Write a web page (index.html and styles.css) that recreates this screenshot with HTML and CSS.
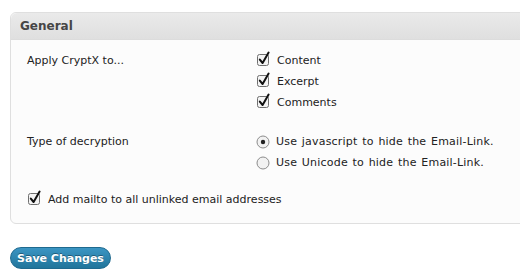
FILE: index.html
```html
<!DOCTYPE html>
<html lang="en">
<head>
    <meta charset="UTF-8">
    <link rel="stylesheet" href="styles.css">
    <title>CryptX Settings</title>
</head>
<body>
    <div class="panel">
        <div class="panel-head">General</div>
        <div class="panel-body">
            <div class="row">
                <div class="row-label">Apply CryptX to...</div>
                <div class="row-options">
                    <label class="opt">
                        <svg class="check" viewBox="0 0 16 16"><rect x="1.5" y="3.5" width="11" height="11" rx="2"/><path d="M3.8 8.6 L6.6 12 L12.6 1.6"/></svg>
                        Content
                    </label>
                    <label class="opt">
                        <svg class="check" viewBox="0 0 16 16"><rect x="1.5" y="3.5" width="11" height="11" rx="2"/><path d="M3.8 8.6 L6.6 12 L12.6 1.6"/></svg>
                        Excerpt
                    </label>
                    <label class="opt">
                        <svg class="check" viewBox="0 0 16 16"><rect x="1.5" y="3.5" width="11" height="11" rx="2"/><path d="M3.8 8.6 L6.6 12 L12.6 1.6"/></svg>
                        Comments
                    </label>
                </div>
            </div>

            <div class="row row-radio">
                <div class="row-label">Type of decryption</div>
                <div class="row-options">
                    <label class="opt">
                        <svg class="radio" viewBox="0 0 14 14"><circle cx="7" cy="7" r="6"/><circle class="dot" cx="7" cy="7" r="2.2"/></svg>
                        Use javascript to hide the Email-Link.
                    </label>
                    <label class="opt">
                        <svg class="radio" viewBox="0 0 14 14"><circle cx="7" cy="7" r="6"/></svg>
                        Use Unicode to hide the Email-Link.
                    </label>
                </div>
            </div>

            <div class="row row-mailto">
                <label class="opt">
                    <svg class="check" viewBox="0 0 16 16"><rect x="1.5" y="3.5" width="11" height="11" rx="2"/><path d="M3.8 8.6 L6.6 12 L12.6 1.6"/></svg>
                    Add mailto to all unlinked email addresses
                </label>
            </div>
        </div>
    </div>

    <button class="save-btn">Save Changes</button>
</body>
</html>
```

FILE: styles.css
```css
html, body {
    margin: 0;
    padding: 0;
    overflow: hidden;
    background: #fff;
}

body {
    font-family: "DejaVu Sans", "Liberation Sans", sans-serif;
    font-size: 11px;
    color: #222;
    padding-top: 12px;
}

.panel {
    margin-left: 10px;
    width: 530px;
    border: 1px solid #dfdfdf;
    border-radius: 6px;
    background: #fcfcfc;
}

.panel-head {
    height: 26px;
    line-height: 26px;
    padding-left: 9px;
    background: linear-gradient(#eaeaea, #dfdfdf);
    border-bottom: 1px solid #dcdcdc;
    border-radius: 6px 6px 0 0;
    font-size: 12px;
    font-weight: bold;
    color: #464646;
}

.panel-body {
    padding: 10px 0 13px 16px;
}

.row {
    display: flex;
}

.row-label {
    width: 229px;
    line-height: 21px;
}

.row-options {
    display: flex;
    flex-direction: column;
}

.row-radio {
    margin-top: 18px;
}

.row-radio .opt {
    word-spacing: 1px;
    letter-spacing: 0.2px;
}

.row-mailto {
    margin-top: 16px;
}

.opt {
    display: flex;
    align-items: center;
    height: 21px;
    gap: 5px;
}

.check {
    width: 16px;
    height: 16px;
    margin-top: -3px;
}

.check rect {
    fill: #f4f4f4;
    stroke: #6f6f6f;
    stroke-width: 1;
}

.check path {
    fill: none;
    stroke: #111;
    stroke-width: 2;
    stroke-linecap: round;
    stroke-linejoin: round;
}

.radio {
    width: 14px;
    height: 14px;
    margin-right: 1px;
}

.radio circle {
    fill: #f2f2f2;
    stroke: #8c8c8c;
    stroke-width: 1;
}

.radio .dot {
    fill: #222;
    stroke: none;
}

.save-btn {
    display: block;
    margin: 23px 0 0 10px;
    width: 101px;
    height: 22px;
    padding: 0;
    border: 1px solid #1f6a8f;
    border-radius: 11px;
    background: linear-gradient(#3b95c3, #21759b);
    color: #fff;
    font-family: "DejaVu Sans", sans-serif;
    font-size: 11px;
    font-weight: bold;
    text-shadow: 0 -1px 0 rgba(0, 0, 0, 0.35);
}
```
